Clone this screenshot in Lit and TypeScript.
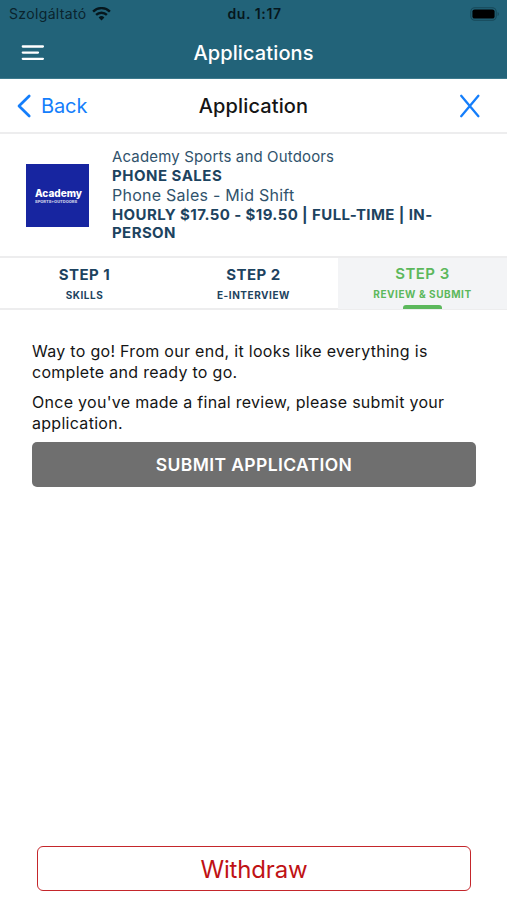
import { LitElement, html, css } from "lit";
import { customElement } from "lit/decorators.js";
import { classMap } from "lit/directives/class-map.js";

const STEPS = [
  { title: "STEP 1", label: "SKILLS", active: false },
  { title: "STEP 2", label: "E-INTERVIEW", active: false },
  { title: "STEP 3", label: "REVIEW & SUBMIT", active: true },
];

@customElement("app-root")
class AppRoot extends LitElement {
  static styles = css`
    :host {
      display: flex;
      flex-direction: column;
      box-sizing: border-box;
      width: 100%;
      height: 900px;
      background: #fff;
      color: #151515;
      font-family: Inter, "Liberation Sans", sans-serif;
      white-space: nowrap;
      overflow: hidden;
    }
    * { box-sizing: border-box; }
    svg { display: block; }
    p { margin: 0; }
    button { font: inherit; cursor: pointer; padding: 0; margin: 0; background: none; border: 0; color: inherit; }
    .top { background: #226379; height: 79px; border-bottom: 1px solid #3d7a8d; }
    .status {
      display: grid;
      grid-template-columns: 1fr auto 1fr;
      align-items: center;
      height: 27px;
      padding: 0 7px 0 9px;
      color: #06171d;
      font-size: 14px;
      letter-spacing: 0.35px;
    }
    .carrier { display: flex; align-items: center; gap: 5px; color: #0a242d; }
    .time { font-weight: 600; letter-spacing: 0.6px; }
    .battery { justify-self: end; }
    .bar {
      display: grid;
      grid-template-columns: 1fr auto 1fr;
      align-items: center;
      height: 51px;
      padding: 0 21px;
    }
    .title { color: #fff; font-size: 20px; font-weight: 500; letter-spacing: 0.12px; }
    .nav {
      display: grid;
      grid-template-columns: 1fr auto 1fr;
      align-items: center;
      height: 55px;
      padding: 0 26px 0 17px;
      border-bottom: 2px solid #ededee;
    }
    .back { display: flex; align-items: center; gap: 9px; color: #147efb; font-size: 20px; letter-spacing: -0.1px; }
    .heading { font-size: 20px; font-weight: 500; letter-spacing: 0.12px; padding-left: 9px; }
    .close { justify-self: end; }
    .job {
      display: flex;
      align-items: center;
      gap: 23px;
      height: 122px;
      padding-left: 26px;
      color: #31536c;
    }
    .logo {
      width: 63px;
      height: 63px;
      padding-left: 9px;
      background: #1725a0;
      color: #fff;
      display: flex;
      flex-direction: column;
      justify-content: center;
    }
    .brand { font-size: 10px; line-height: 12px; font-weight: 800; }
    .tag { font-size: 4px; line-height: 5px; font-weight: 800; opacity: 0.75; }
    .info { display: flex; flex-direction: column; font-size: 15px; line-height: 19px; }
    .company { letter-spacing: 0.15px; }
    .role { font-size: 16px; line-height: 20px; letter-spacing: 0.25px; }
    .strong { font-weight: 700; color: #1d4360; letter-spacing: 0.5px; }
    .terms { letter-spacing: 0.4px; line-height: 18.5px; }
    .info .company { line-height: 18px; }
    .info .role { margin-bottom: 1px; }
    .steps {
      display: grid;
      grid-template-columns: 1fr 1fr 1fr;
      height: 54px;
      border: solid #ededee;
      border-width: 2px 0;
    }
    .step {
      display: flex;
      flex-direction: column;
      align-items: center;
      padding-top: 7px;
      color: #1d4360;
      font-weight: 700;
    }
    .step-title { font-size: 15px; line-height: 20px; letter-spacing: 0.5px; }
    .step-label { font-size: 10px; line-height: 20px; letter-spacing: 0.55px; }
    .active { background: #f3f4f6; color: #5cb85c; font-weight: 600; padding-top: 6px; }
    .active .step-label { font-weight: 700; }
    .marker { width: 39px; height: 4px; flex: none; margin-top: 1px; border-radius: 3px 3px 0 0; background: #5cb85c; }
    .body {
      display: flex;
      flex-direction: column;
      flex: 1;
      padding: 31px 31px 9px 32px;
      font-size: 16px;
      line-height: 21px;
      letter-spacing: 0.29px;
    }
    .para + .para { margin-top: 9px; }
    .submit {
      height: 45px;
      margin-top: 8px;
      border-radius: 5px;
      background: #6f6f6f;
      color: #fff;
      font-size: 17.5px;
      font-weight: 600;
      letter-spacing: 0.38px;
    }
    .withdraw {
      height: 45px;
      margin: auto 5px 0;
      padding-top: 2px;
      border: 1.5px solid #c4262b;
      border-radius: 6px;
      color: #bf1215;
      font-size: 24px;
      letter-spacing: -0.15px;
    }
  `;

  render() {
    return html`
      <header class="top">
        <div class="status">
          <div class="carrier">
            <span>Szolgáltató</span>
            <svg width="19" height="14" viewBox="0 0 19 14" fill="none" stroke="#06171d" stroke-width="2.4">
              <path d="M1.1 4.6a12 12 0 0 1 16.8 0M4.1 7.9a7.8 7.8 0 0 1 10.8 0" />
              <path d="M9.5 13.4 6.6 10.5a4.2 4.2 0 0 1 5.8 0Z" fill="#06171d" stroke="none" />
            </svg>
          </div>
          <div class="time">du. 1:17</div>
          <svg class="battery" width="30" height="14" viewBox="0 0 30 14">
            <rect x="0.8" y="0.8" width="25.4" height="12.4" rx="4" fill="none" stroke="#174858" stroke-width="1.1" />
            <rect x="2.4" y="2.4" width="22.2" height="9.2" rx="2.2" fill="#000" />
            <path d="M27.6 5v4a2.2 2.2 0 0 0 0-4Z" fill="#174858" />
          </svg>
        </div>
        <div class="bar">
          <svg width="24" height="18" viewBox="0 0 24 18" stroke="#fff" stroke-width="2.3" stroke-linecap="round">
            <path d="M1.8 2.5h20.1M1.8 8.6h15.2M1.8 14.8h20.1" />
          </svg>
          <div class="title">Applications</div>
        </div>
      </header>
      <nav class="nav">
        <div class="back">
          <svg width="15" height="24" viewBox="0 0 15 24" fill="none" stroke="#147efb" stroke-width="2.7" stroke-linecap="round" stroke-linejoin="round">
            <path d="M12.2 2 2 12l10.2 10" />
          </svg>
          <span>Back</span>
        </div>
        <div class="heading">Application</div>
        <svg class="close" width="22" height="24" viewBox="0 0 22 24" stroke="#147efb" stroke-width="2.3" stroke-linecap="round">
          <path d="M2.2 1.8 19.4 22.2M19.4 1.8 2.2 22.2" />
        </svg>
      </nav>
      <section class="job">
        <div class="logo">
          <div class="brand">Academy</div>
          <div class="tag">SPORTS+OUTDOORS</div>
        </div>
        <div class="info">
          <span class="company">Academy Sports and Outdoors</span>
          <span class="strong">PHONE SALES</span>
          <span class="role">Phone Sales - Mid Shift</span>
          <span class="strong terms">HOURLY $17.50 - $19.50 | FULL-TIME | IN-<br />PERSON</span>
        </div>
      </section>
      <section class="steps">
        ${STEPS.map(
          (s) => html`
            <div class=${classMap({ step: true, active: s.active })}>
              <span class="step-title">${s.title}</span>
              <span class="step-label">${s.label}</span>
              ${s.active ? html`<span class="marker"></span>` : ""}
            </div>
          `
        )}
      </section>
      <main class="body">
        <p class="para">Way to go! From our end, it looks like everything is<br />complete and ready to go.</p>
        <p class="para">Once you've made a final review, please submit your<br />application.</p>
        <button class="submit">SUBMIT APPLICATION</button>
        <button class="withdraw">Withdraw</button>
      </main>
    `;
  }
}
